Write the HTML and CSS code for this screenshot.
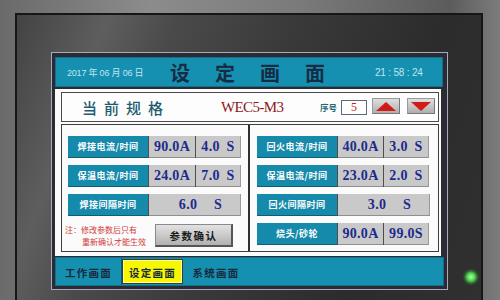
FILE: index.html
```html
<!DOCTYPE html>
<html lang="zh">
<head>
<meta charset="utf-8">
<title>设定画面</title>
<link rel="stylesheet" href="styles.css">
</head>
<body>
<div class="device">
  <div class="bezel">
    <div class="screen">
      <div class="titlebar">
        <span class="date">2017 年 06 月 06 日</span>
        <span class="title">设定画面</span>
        <span class="time">21 : 58 : 24</span>
      </div>
      <div class="panel">
        <div class="spec">
          <span class="spec-label">当前规格</span>
          <span class="spec-model">WEC5-M3</span>
          <span class="seq-label">序号</span>
          <span class="seq-input">5</span>
          <span class="arrow-btn up"><svg width="20" height="9" viewBox="0 0 20 9"><polygon points="10,0 20,9 0,9" fill="#d11a1a"/></svg></span>
          <span class="arrow-btn down"><svg width="20" height="9" viewBox="0 0 20 9"><polygon points="0,0 20,0 10,9" fill="#d11a1a"/></svg></span>
        </div>
        <div class="params">
          <div class="col col-left">
            <div class="row">
              <div class="label">焊接电流/时间</div>
              <div class="cell w46">90.0A</div>
              <div class="cell w45 last">4.0 S</div>
            </div>
            <div class="row">
              <div class="label">保温电流/时间</div>
              <div class="cell w46">24.0A</div>
              <div class="cell w45 last">7.0 S</div>
            </div>
            <div class="row">
              <div class="label">焊接间隔时间</div>
              <div class="cell wide last">6.0 S</div>
            </div>
            <div class="confirm-area">
              <div class="note"><span class="note-line">注：修改参数后只有</span><span class="note-line indent">重新确认才能生效</span></div>
              <div class="confirm-btn">参数确认</div>
            </div>
          </div>
          <div class="divider"></div>
          <div class="col col-right">
            <div class="row">
              <div class="label">回火电流/时间</div>
              <div class="cell w45">40.0A</div>
              <div class="cell w45 last">3.0 S</div>
            </div>
            <div class="row">
              <div class="label">保温电流/时间</div>
              <div class="cell w45">23.0A</div>
              <div class="cell w45 last">2.0 S</div>
            </div>
            <div class="row">
              <div class="label">回火间隔时间</div>
              <div class="cell wide last">3.0 S</div>
            </div>
            <div class="row">
              <div class="label">烧头/砂轮</div>
              <div class="cell w45">90.0A</div>
              <div class="cell w45 last tight">99.0S</div>
            </div>
          </div>
        </div>
      </div>
      <div class="navbar">
        <div class="nav-item first">工作画面</div>
        <div class="nav-item active">设定画面</div>
        <div class="nav-item">系统画面</div>
      </div>
    </div>
    <div class="led"></div>
  </div>
</div>
</body>
</html>
```

FILE: styles.css
```css
* { box-sizing: border-box; }

html, body {
  margin: 0;
  width: 500px;
  height: 300px;
  overflow: hidden;
}

body {
  background: linear-gradient(90deg, #6a6a6a 0%, #8c8c8c 30%, #7a7a7a 60%, #5c5c5c 90%, #7c7c7c 100%);
  font-family: "Noto Sans CJK SC", "Liberation Sans", sans-serif;
}

.device {
  padding: 13px 0 0 15px;
}

.bezel {
  position: relative;
  width: 468px;
  height: 300px;
  border: 2px solid #161616;
  background: linear-gradient(110deg, #434343 0%, #5e5e5e 16%, #4a4a4a 28%, #393939 50%, #2c2c2c 75%, #303030 100%);
  padding: 37px 0 0 34px;
}

.screen {
  width: 397px;
  height: 238px;
  background: #2b2b32;
  border: 1px solid #a8a8c2;
  padding: 4px 4px 3px 3px;
  display: flex;
  flex-direction: column;
}

/* ---------- title bar ---------- */
.titlebar {
  height: 30px;
  width: 388px;
  background: #1690b1;
  border: 1px solid #0f6f8c;
  display: flex;
  align-items: center;
  padding-left: 11px;
  color: #bfe6f1;
}

.date {
  width: 103px;
  font-family: "Liberation Sans", "Noto Sans CJK SC", sans-serif;
  font-size: 9px;
  letter-spacing: -0.2px;
}

.title {
  width: 205px;
  font-size: 20px;
  font-weight: 700;
  letter-spacing: 25px;
  color: #172c44;
  line-height: 1;
  padding-top: 1px;
}

.time {
  font-family: "Liberation Sans", sans-serif;
  font-size: 10px;
  letter-spacing: -0.2px;
}

/* ---------- white panel ---------- */
.panel {
  margin-top: 2px;
  width: 386px;
  height: 167px;
  background: #fbfbfb;
  padding: 3px 2px 4px 6px;
  display: flex;
  flex-direction: column;
  gap: 2px;
}

.spec {
  height: 30px;
  border: 1px solid #4a4a4a;
  display: flex;
  align-items: center;
  background: #fdfdfd;
}

.spec-label {
  margin-left: 20px;
  width: 88px;
  font-size: 15px;
  letter-spacing: 7px;
  color: #215b6e;
  font-weight: 500;
}

.spec-model {
  margin-left: 51px;
  width: 57px;
  font-family: "Liberation Serif", serif;
  font-size: 15px;
  letter-spacing: -0.6px;
  color: #8c1818;
  white-space: nowrap;
}

.seq-label {
  margin-left: 42px;
  font-size: 8.5px;
  color: #1f6a70;
  font-weight: 700;
}

.seq-input {
  margin-left: 4px;
  width: 26px;
  height: 15px;
  border: 1px solid #5a6a7a;
  background: #fff;
  color: #d11a1a;
  font-family: "Liberation Serif", serif;
  font-size: 12px;
  line-height: 13px;
  text-align: center;
}

.arrow-btn {
  width: 28px;
  height: 16px;
  margin-left: 5px;
  margin-bottom: 2px;
  background: linear-gradient(180deg, #dedede 0%, #c2c2c2 60%, #aeaeae 100%);
  border: 1px solid #9a9a9a;
  border-right-color: #777;
  border-bottom-color: #777;
  display: flex;
  align-items: center;
  justify-content: center;
}

.arrow-btn.down {
  margin-left: 7px;
}

.params {
  flex: 1;
  border: 1px solid #3e3e3e;
  display: flex;
  background: #fbfbfb;
}

.col {
  display: flex;
  flex-direction: column;
  gap: 7px;
  padding-top: 11px;
}

.col-left {
  width: 186px;
  padding-left: 6px;
}

.col-right {
  padding-left: 7px;
}

.divider {
  width: 2px;
  background: #2f2f2f;
}

.row {
  height: 22px;
  display: flex;
  background: #4d4d4d;
  align-self: flex-start;
}

.label {
  width: 80px;
  background: #168aab;
  color: #ffffff;
  font-size: 9px;
  font-weight: 700;
  letter-spacing: 0.5px;
  display: flex;
  align-items: center;
  justify-content: center;
  border-bottom: 1px solid #0d5d74;
}

.cell {
  margin-left: 1px;
  background: #c9c9c9;
  color: #1d2a8c;
  font-family: "Liberation Serif", serif;
  font-weight: 700;
  font-size: 14px;
  letter-spacing: 0.3px;
  display: flex;
  align-items: center;
  justify-content: center;
  white-space: pre;
  word-spacing: 3px;
  border-bottom: 1px solid #8f8f8f;
}

.cell.w46 { width: 46px; }
.cell.w45 { width: 45px; }
.cell.last { border-right: 1px solid #9a9a9a; }
.cell.tight { letter-spacing: 0.3px; }

.cell.wide {
  width: 92px;
  word-spacing: 13px;
  padding-left: 12px;
}

.confirm-area {
  display: flex;
  align-items: center;
  margin-left: -3px;
}

.note {
  width: 90px;
  display: flex;
  flex-direction: column;
  color: #d33a3a;
  font-size: 8px;
  line-height: 12px;
  padding-top: 1px;
}

.note-line {
  white-space: nowrap;
}

.note-line.indent {
  padding-left: 17px;
}

.confirm-btn {
  width: 78px;
  height: 23px;
  background: linear-gradient(180deg, #e2e2e2 0%, #c8c8c8 55%, #b0b0b0 100%);
  border: 1px solid #8a8a8a;
  border-right: 2px solid #555;
  border-bottom: 2px solid #555;
  display: flex;
  align-items: center;
  justify-content: center;
  font-size: 10.5px;
  font-weight: 700;
  color: #1a1a1a;
  letter-spacing: 1.5px;
}

/* ---------- nav bar ---------- */
.navbar {
  margin-top: 1px;
  height: 29px;
  width: 389px;
  background: #1690b1;
  border: 1px solid #0f6f8c;
  display: flex;
  align-items: stretch;
}

.nav-item {
  width: 66px;
  display: flex;
  align-items: center;
  justify-content: center;
  font-size: 10.5px;
  font-weight: 700;
  letter-spacing: 1.2px;
  color: #182a3e;
  padding-top: 1px;
}

.nav-item.first {
  border-right: 1px solid #0d5d74;
}

.nav-item.active {
  width: 61px;
  background: #f7f700;
  border: 1px solid #3a3a3a;
  margin: 1px 0;
  box-shadow: inset 0 0 0 1px #ffff99;
}

/* ---------- power led ---------- */
.led {
  position: absolute;
  left: 448px;
  top: 256px;
  width: 12px;
  height: 12px;
  border-radius: 50%;
  background: radial-gradient(circle, #b9ffb0 0%, #4fd04f 45%, #2a8a2a 70%, #555 75%, #6a6a6a 100%);
  box-shadow: 0 0 3px #4fd04f;
}
```
